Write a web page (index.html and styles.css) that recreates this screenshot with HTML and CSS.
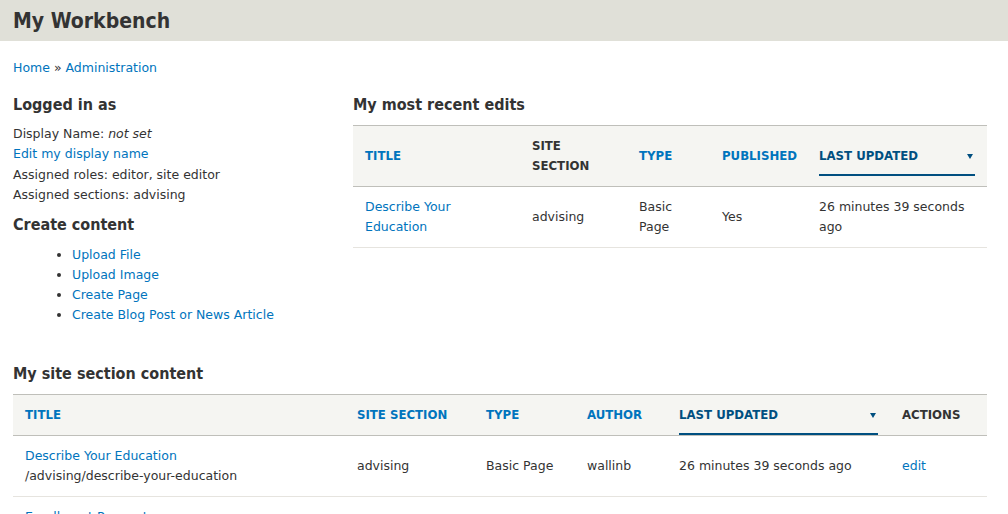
FILE: index.html
```html
<!DOCTYPE html>
<html lang="en">
<head>
<meta charset="utf-8">
<title>My Workbench</title>
<link rel="stylesheet" href="styles.css">
</head>
<body>
<header class="page-header">
  <h1 class="page-title">My Workbench</h1>
</header>
<main class="content">
  <nav class="breadcrumb"><a href="#">Home</a> » <a href="#">Administration</a></nav>

  <div class="top-row">
    <section class="profile">
      <h2 class="block-title">Logged in as</h2>
      <div class="profile-info">
        <div>Display Name: <em>not set</em></div>
        <div><a href="#">Edit my display name</a></div>
        <div>Assigned roles: editor, site editor</div>
        <div>Assigned sections: advising</div>
      </div>
      <h2 class="block-title create-title">Create content</h2>
      <ul class="create-list">
        <li><a href="#">Upload File</a></li>
        <li><a href="#">Upload Image</a></li>
        <li><a href="#">Create Page</a></li>
        <li><a href="#">Create Blog Post or News Article</a></li>
      </ul>
    </section>

    <section class="recent">
      <h2 class="block-title">My most recent edits</h2>
      <table class="data-table">
        <colgroup>
          <col class="r-title"><col class="r-section"><col class="r-type"><col class="r-pub"><col class="r-updated">
        </colgroup>
        <thead>
          <tr>
            <th><a href="#" class="sort-link">Title</a></th>
            <th>Site Section</th>
            <th><a href="#" class="sort-link">Type</a></th>
            <th><a href="#" class="sort-link">Published</a></th>
            <th><a href="#" class="sort-link is-active"><span>Last Updated</span><span class="sort-arrow"></span></a></th>
          </tr>
        </thead>
        <tbody>
          <tr>
            <td><a href="#">Describe Your Education</a></td>
            <td>advising</td>
            <td>Basic Page</td>
            <td>Yes</td>
            <td>26 minutes 39 seconds ago</td>
          </tr>
        </tbody>
      </table>
    </section>
  </div>

  <section class="section-content">
    <h2 class="block-title">My site section content</h2>
    <table class="data-table">
      <colgroup>
        <col class="s-title"><col class="s-section"><col class="s-type"><col class="s-author"><col class="s-updated"><col class="s-actions">
      </colgroup>
      <thead>
        <tr>
          <th><a href="#" class="sort-link">Title</a></th>
          <th><a href="#" class="sort-link">Site Section</a></th>
          <th><a href="#" class="sort-link">Type</a></th>
          <th><a href="#" class="sort-link">Author</a></th>
          <th><a href="#" class="sort-link is-active"><span>Last Updated</span><span class="sort-arrow"></span></a></th>
          <th>Actions</th>
        </tr>
      </thead>
      <tbody>
        <tr>
          <td><a href="#">Describe Your Education</a><br>/advising/describe-your-education</td>
          <td>advising</td>
          <td>Basic Page</td>
          <td>wallinb</td>
          <td>26 minutes 39 seconds ago</td>
          <td><a href="#">edit</a></td>
        </tr>
        <tr>
          <td><a href="#">Enrollment Requests</a><br>/advising/enrollment-requests</td>
          <td>advising</td>
          <td>Basic Page</td>
          <td>wallinb</td>
          <td>1 hour 12 minutes ago</td>
          <td><a href="#">edit</a></td>
        </tr>
      </tbody>
    </table>
  </section>
</main>
</body>
</html>
```

FILE: styles.css
```css
html, body {
  margin: 0;
  padding: 0;
}

body {
  font-family: "DejaVu Sans", sans-serif;
  font-size: 12.5px;
  line-height: 20px;
  color: #333;
  background: #fff;
}

a {
  color: #0074bd;
  text-decoration: none;
}

.page-header {
  background: #e0e0d8;
  height: 41px;
  padding-left: 13px;
  box-sizing: border-box;
}

.page-title {
  margin: 0;
  padding-top: 2px;
  font-family: "DejaVu Sans Condensed", "DejaVu Sans", sans-serif;
  font-stretch: condensed;
  font-weight: bold;
  font-size: 21px;
  line-height: 39px;
  color: #333;
}

.content {
  padding: 0 21px 0 13px;
}

.breadcrumb {
  margin-top: 17px;
}

.top-row {
  display: flex;
  margin-top: 17px;
}

.profile {
  width: 340px;
  flex: none;
}

.recent {
  flex: 1;
  min-width: 0;
}

.block-title {
  margin: 0;
  font-family: "DejaVu Sans Condensed", "DejaVu Sans", sans-serif;
  font-stretch: condensed;
  font-weight: bold;
  font-size: 16px;
  line-height: 20px;
  color: #333;
}

.profile-info {
  margin-top: 9px;
  line-height: 20.3px;
}

.create-title {
  margin-top: 10px;
}

.create-list {
  margin: 10px 0 0;
  padding-left: 59px;
}

.section-content {
  margin-top: 39px;
}

.data-table {
  width: 100%;
  margin-top: 10px;
  border-collapse: collapse;
  table-layout: fixed;
}

.data-table th {
  background: #f5f5f2;
  border-top: 1px solid #bfbfba;
  border-bottom: 1px solid #bfbfba;
  padding: 10px 12px;
  text-align: left;
  vertical-align: middle;
  font-size: 11.75px;
  font-weight: bold;
  text-transform: uppercase;
  color: #333;
}

.data-table td {
  border-bottom: 1px solid #e6e4df;
  padding: 10px 12px;
  vertical-align: middle;
}

.sort-link {
  color: #0074bd;
}

.sort-link.is-active {
  display: flex;
  align-items: center;
  justify-content: space-between;
  color: #004f80;
  padding-bottom: 8px;
  margin-bottom: -10px;
  border-bottom: 2px solid #004f80;
}

.sort-arrow {
  width: 0;
  height: 0;
  margin-right: 2px;
  border-left: 3.5px solid transparent;
  border-right: 3.5px solid transparent;
  border-top: 5px solid #004f80;
}

.r-title { width: 167px; }
.r-section { width: 107px; }
.r-type { width: 83px; }
.r-pub { width: 97px; }
.r-updated { width: 180px; }

.s-title { width: 332px; }
.s-section { width: 129px; }
.s-type { width: 101px; }
.s-author { width: 92px; }
.s-updated { width: 223px; }
.s-actions { width: 97px; }
```
